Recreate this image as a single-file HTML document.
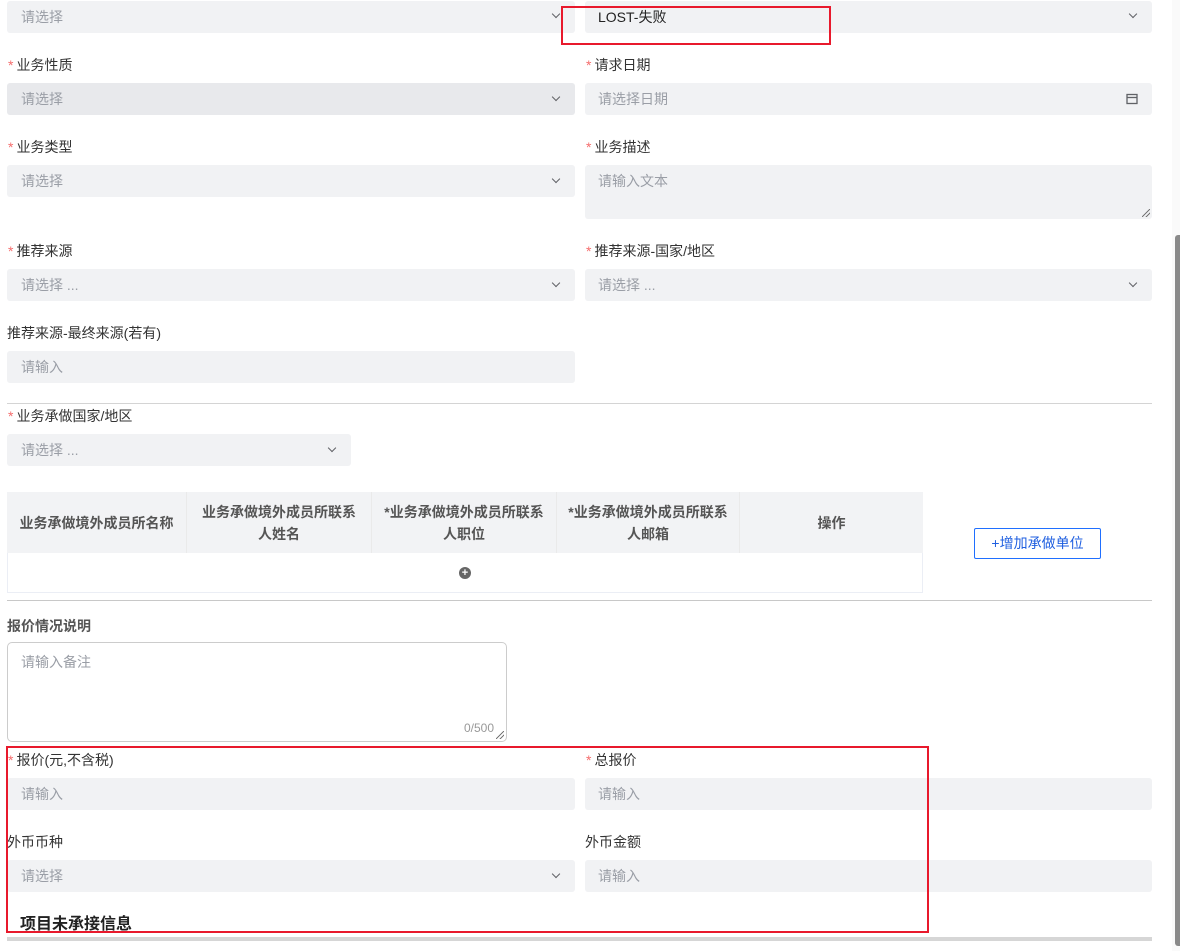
<!DOCTYPE html>
<html><head><meta charset="utf-8"><style>
*{box-sizing:border-box;margin:0;padding:0}
body{width:1180px;height:951px;overflow:hidden;background:#fff;font-family:"Liberation Sans","Noto Sans CJK SC",sans-serif;font-size:14px;color:#333;position:relative}
.a{position:absolute}
.in{position:absolute;height:32px;background:#f1f2f4;border-radius:3px;color:#9a9ea6;font-size:14px;line-height:32px;padding-left:14px}
.lb{position:absolute;font-size:14px;color:#333;line-height:20px}
.lb i{color:#f56c6c;font-style:normal;margin-right:3px;font-size:14px}
.chev{position:absolute;right:16px;top:11px;width:6px;height:6px;border-right:1.2px solid #606266;border-bottom:1.2px solid #606266;transform:rotate(45deg)}
.hr{position:absolute;height:1px;background:#d4d4d4}
.th{position:absolute;top:492px;height:61px;display:flex;align-items:center;justify-content:center;text-align:center;font-weight:bold;color:#555;font-size:14px;line-height:22px;background:#f2f3f5;border-right:1px solid #eaeaea}
.red{position:absolute;border:2px solid #e8192c}
.grip{position:absolute;right:2px;bottom:2px;width:8px;height:8px;background:linear-gradient(135deg,transparent 45%,#777 45%,#777 55%,transparent 55%,transparent 70%,#777 70%,#777 80%,transparent 80%)}
</style></head><body>
<div class="a" style="left:1172px;top:0;width:8px;height:951px;background:#fafafa"></div>
<div class="a" style="left:1175px;top:235px;width:5px;height:711px;background:#8a8a8a;border-radius:3px 0 0 3px"></div>

<div class="in" style="left:7px;top:1px;width:568px">请选择<span class="chev" style="top:10px"></span></div>
<div class="in" style="left:585px;top:1px;width:567px;color:#222;padding-left:13px">LOST-失败<span class="chev" style="top:10px"></span></div>
<div class="red" style="left:561px;top:6px;width:270px;height:39px"></div>

<div class="lb" style="left:8px;top:55px"><i>*</i>业务性质</div>
<div class="lb" style="left:586px;top:55px"><i>*</i>请求日期</div>
<div class="in" style="left:7px;top:83px;width:568px;background:#e8e9ec">请选择<span class="chev"></span></div>
<div class="in" style="left:585px;top:83px;width:567px;padding-left:13px">请选择日期
<svg class="a" style="right:14px;top:10px" width="12" height="12" viewBox="0 0 12 12"><rect x="1" y="1.5" width="10" height="9" fill="none" stroke="#606266" stroke-width="1.3"/><line x1="1" y1="4.5" x2="11" y2="4.5" stroke="#606266" stroke-width="1.3"/></svg></div>

<div class="lb" style="left:8px;top:137px"><i>*</i>业务类型</div>
<div class="lb" style="left:586px;top:137px"><i>*</i>业务描述</div>
<div class="in" style="left:7px;top:165px;width:568px">请选择<span class="chev"></span></div>
<div class="in" style="left:585px;top:165px;width:567px;height:54px;line-height:32px;padding-left:13px">请输入文本<span class="grip"></span></div>

<div class="lb" style="left:8px;top:241px"><i>*</i>推荐来源</div>
<div class="lb" style="left:586px;top:241px"><i>*</i>推荐来源-国家/地区</div>
<div class="in" style="left:7px;top:269px;width:568px">请选择 ...<span class="chev"></span></div>
<div class="in" style="left:585px;top:269px;width:567px;padding-left:13px">请选择 ...<span class="chev"></span></div>

<div class="lb" style="left:7px;top:323px">推荐来源-最终来源(若有)</div>
<div class="in" style="left:7px;top:351px;width:568px">请输入</div>

<div class="hr" style="left:7px;top:403px;width:1145px"></div>
<div class="lb" style="left:8px;top:406px"><i>*</i>业务承做国家/地区</div>
<div class="in" style="left:7px;top:434px;width:344px">请选择 ...<span class="chev"></span></div>

<div class="a" style="left:7px;top:492px;width:916px;height:101px;border:1px solid #ebeef5"></div>
<div class="th" style="left:7px;width:180px">业务承做境外成员所名称</div>
<div class="th" style="left:187px;width:185px">业务承做境外成员所联系<br>人姓名</div>
<div class="th" style="left:372px;width:185px">*业务承做境外成员所联系<br>人职位</div>
<div class="th" style="left:557px;width:183px">*业务承做境外成员所联系<br>人邮箱</div>
<div class="th" style="left:740px;width:183px;border-right:none">操作</div>
<div class="a" style="left:459px;top:567px;width:12px;height:12px;border-radius:50%;background:#666;color:#fff;font-size:11px;line-height:12px;text-align:center;font-weight:bold">+</div>
<div class="a" style="left:974px;top:528px;width:127px;height:31px;border:1px solid #1f6fff;border-radius:2px;color:#1f5fe0;text-align:center;line-height:29px;font-size:14px">+增加承做单位</div>

<div class="hr" style="left:7px;top:600px;width:1145px;background:#c8c8c8"></div>
<div class="lb" style="left:7px;top:616px;font-weight:bold;color:#555">报价情况说明</div>
<div class="a" style="left:7px;top:642px;width:500px;height:100px;border:1px solid #ccc;border-radius:5px;color:#9a9ea6;padding:9px 13px">请输入备注<span class="a" style="right:12px;bottom:6px;font-size:12px;color:#999">0/500</span><span class="grip"></span></div>

<div class="lb" style="left:8px;top:750px"><i>*</i>报价(元,不含税)</div>
<div class="lb" style="left:586px;top:750px"><i>*</i>总报价</div>
<div class="in" style="left:7px;top:778px;width:568px">请输入</div>
<div class="in" style="left:585px;top:778px;width:567px;padding-left:13px">请输入</div>
<div class="lb" style="left:7px;top:832px">外币币种</div>
<div class="lb" style="left:585px;top:832px">外币金额</div>
<div class="in" style="left:7px;top:860px;width:568px">请选择<span class="chev"></span></div>
<div class="in" style="left:585px;top:860px;width:567px;padding-left:13px">请输入</div>
<div class="a" style="left:20px;top:913px;height:18px;overflow:hidden;font-size:16px;font-weight:bold;color:#222;line-height:24px">项目未承接信息</div>
<div class="a" style="left:7px;top:937px;width:1145px;height:4px;background:#d6d6d6"></div>
<div class="red" style="left:6px;top:746px;width:923px;height:187px"></div>
</body></html>
